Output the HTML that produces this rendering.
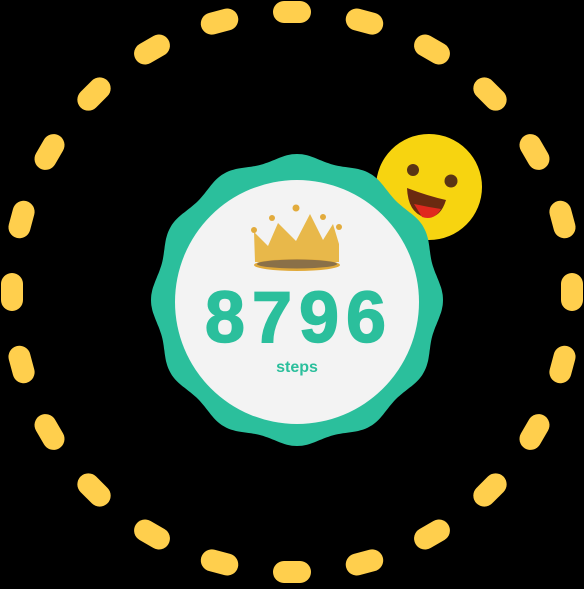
<!DOCTYPE html>
<html><head><style>
html,body{margin:0;padding:0;background:#000;}
body{width:584px;height:584px;overflow:hidden;}
</style></head><body>
<svg width="584" height="584" viewBox="0 0 584 584" xmlns="http://www.w3.org/2000/svg">
<rect width="584" height="584" fill="#000"/>
<g id="dashes" fill="#ffcf4d"></g>
<!-- emoji -->
<circle cx="429" cy="187" r="53" fill="#f7d410"/>
<circle cx="413" cy="170" r="6" fill="#5a3414"/>
<circle cx="451" cy="181" r="6.5" fill="#5a3414"/>
<path d="M407 188 Q428 196 446 200 Q440 220 424 217 Q408 212 407 188 Z" fill="#6b2a10"/>
<path d="M414 204 Q428 207 441 209 Q434 221 422 217 Z" fill="#e0281e"/>
<!-- badge -->
<path id="scallop" fill="#2bbf9c"/>
<circle cx="297" cy="302" r="122" fill="#f3f3f3"/>
<!-- crown -->
<g>
<path d="M255 262 L254 232 L268 246 L278 223 L296 241 L310 214 L323 240 L333 224 L339 244 L339 262 Z" fill="#e8b84a"/>
<circle cx="254" cy="230" r="3" fill="#e2ab3c"/>
<circle cx="272" cy="218" r="3" fill="#e2ab3c"/>
<circle cx="296" cy="208" r="3.5" fill="#e2ab3c"/>
<circle cx="323" cy="217" r="3" fill="#e2ab3c"/>
<circle cx="339" cy="227" r="3" fill="#e2ab3c"/>
<ellipse cx="297" cy="265" rx="43" ry="6" fill="#e0a93a"/>
<ellipse cx="297" cy="264" rx="40" ry="4.5" fill="#8a7048"/>
</g>
<text x="299" y="342" text-anchor="middle" font-family="Liberation Sans, sans-serif" font-weight="bold" font-size="72" letter-spacing="7" fill="#2bbf9c" stroke="#2bbf9c" stroke-width="1.5">8796</text>
<text x="297" y="372" text-anchor="middle" font-family="Liberation Sans, sans-serif" font-weight="bold" font-size="16" fill="#2bbf9c">steps</text>
</svg>
<script>
(function(){
var ns="http://www.w3.org/2000/svg";
var g=document.getElementById("dashes");
for(var i=0;i<24;i++){
 var a=i*15;
 var r=document.createElementNS(ns,"rect");
 r.setAttribute("x",-19);r.setAttribute("y",-11);
 r.setAttribute("width",38);r.setAttribute("height",22);
 r.setAttribute("rx",11);
 r.setAttribute("transform","translate(292 292) rotate("+a+") translate(0 -280)");
 g.appendChild(r);
}
var cx=297,cy=300,d="";
for(var k=0;k<=360;k++){
 var t=k*Math.PI/180;
 var rr=143+3*Math.cos(12*t);
 var x=cx+rr*Math.sin(t),y=cy-rr*Math.cos(t);
 d+=(k?"L":"M")+x.toFixed(1)+" "+y.toFixed(1);
}
document.getElementById("scallop").setAttribute("d",d+"Z");
})();
</script>
</body></html>
